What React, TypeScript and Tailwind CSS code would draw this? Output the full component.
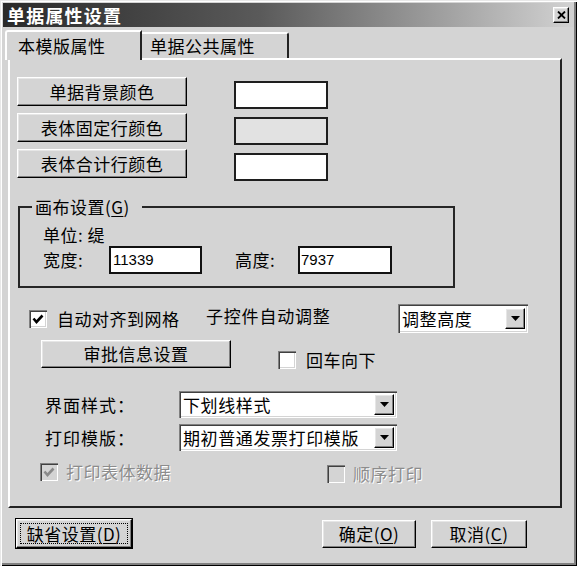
import React from 'react';

// Classic Win9x-style property dialog: 单据属性设置

const FONT = "font-['Noto_Sans_CJK_SC','Noto_Sans',sans-serif]";
const RAISED =
  'border border-t-white border-l-white border-r-black border-b-black shadow-[inset_-1px_-1px_0_#808080,inset_1px_1px_0_#e6e6e6] bg-[#d4d4d4]';
const SUNKEN =
  'shadow-[inset_1px_1px_0_#808080,inset_2px_2px_0_#404040,inset_-1px_-1px_0_#ffffff,inset_-2px_-2px_0_#d4d4d4]';

function Button({
  children,
  className = '',
}: {
  children: React.ReactNode;
  className?: string;
}) {
  return (
    <div
      className={`${RAISED} flex items-center justify-center text-[17px] leading-[20px] tracking-[0.5px] text-black ${className}`}
    >
      {children}
    </div>
  );
}

function Check({ checked = false, disabled = false }: { checked?: boolean; disabled?: boolean }) {
  return (
    <div
      className={`${SUNKEN} flex h-[18px] w-[18px] shrink-0 items-center justify-center ${
        disabled ? 'bg-[#d4d4d4]' : 'bg-white'
      }`}
    >
      {checked && (
        <svg width="12" height="12" viewBox="0 0 12 12">
          <polyline
            points="1.5,5.5 4.5,9 10.5,2.5"
            fill="none"
            stroke={disabled ? '#8a8a8a' : '#000'}
            strokeWidth="2.6"
          />
        </svg>
      )}
    </div>
  );
}

function Combo({ value, className = '' }: { value: string; className?: string }) {
  return (
    <div className={`${SUNKEN} flex items-center bg-white pl-[4px] pr-[3px] ${className}`}>
      <span className="flex-1 whitespace-nowrap text-[17px] leading-[20px] tracking-[0.6px] text-black">{value}</span>
      <div className={`${RAISED} flex h-[21px] w-[20px] shrink-0 items-center justify-center`}>
        <svg width="9" height="5" viewBox="0 0 9 5">
          <polygon points="0,0 9,0 4.5,5" fill="#000" />
        </svg>
      </div>
    </div>
  );
}

function Disabled({ children }: { children: React.ReactNode }) {
  return (
    <span className="text-[17px] leading-[20px] tracking-[0.5px] text-[#8c8c8c] [text-shadow:1px_1px_0_#ffffff]">
      {children}
    </span>
  );
}

export default function App() {
  return (
    <div
      className={`${FONT} flex h-[566px] w-[577px] flex-col bg-[#d4d4d4] p-[3px] shadow-[inset_1px_1px_0_#e8e8e8,inset_2px_2px_0_#ffffff,inset_-1px_-1px_0_#000000,inset_-3px_-3px_0_#808080]`}
    >
      {/* Title bar */}
      <div className="flex h-[24px] items-center bg-[linear-gradient(to_right,#2a2a2a,#5a5a5a_45%,#d2d2d2)] pl-[4px] pr-[5px]">
        <span className="flex-1 text-[18px] font-bold leading-[24px] tracking-[1.2px] text-white">单据属性设置</span>
        <div className={`${RAISED} flex h-[16px] w-[16px] items-center justify-center`}>
          <svg width="9" height="8" viewBox="0 0 9 8">
            <path d="M1 0.5 L8 7.5 M8 0.5 L1 7.5" stroke="#000" strokeWidth="1.8" />
          </svg>
        </div>
      </div>

      {/* Tabs */}
      <div className="mt-[3px] ml-[2px] flex h-[28px] items-end">
        <div className="relative z-10 -mb-[2px] flex h-[30px] w-[137px] items-center rounded-tl-[3px] border-t-2 border-l-2 border-r-2 border-t-white border-l-white border-r-[#222] bg-[#d4d4d4] pl-[11px] text-[17px] leading-[20px] tracking-[0.5px] text-black">
          本模版属性
        </div>
        <div className="flex h-[26px] w-[147px] items-center rounded-tr-[3px] border-t-2 border-r-2 border-t-white border-r-[#222] pl-[8px] text-[17px] leading-[20px] tracking-[0.5px] text-black">
          单据公共属性
        </div>
      </div>

      {/* Tab panel */}
      <div className="ml-[5px] flex h-[450px] w-[554px] flex-col border-2 border-t-white border-l-white border-r-[#222] border-b-[#222] text-[17px] leading-[20px] tracking-[0.5px] text-black">
        <div className="flex flex-col gap-[4px] pt-[17px] pl-[7px]">
          <div className="flex">
            <Button className="h-[29px] w-[170px]">单据背景颜色</Button>
            <div className="mt-[4px] ml-[47px] h-[28px] w-[94px] border-2 border-[#1e1e1e] bg-white" />
          </div>
          <div className="flex">
            <Button className="h-[29px] w-[170px]">表体固定行颜色</Button>
            <div className="mt-[4px] ml-[47px] h-[28px] w-[94px] border-2 border-[#1e1e1e] bg-[#e2e2e2]" />
          </div>
          <div className="flex">
            <Button className="h-[29px] w-[170px]">表体合计行颜色</Button>
            <div className="mt-[4px] ml-[47px] h-[28px] w-[94px] border-2 border-[#1e1e1e] bg-white" />
          </div>
        </div>

        {/* Canvas group */}
        <fieldset className="mt-[16px] ml-[8px] w-[437px] border-2 border-[#262626] pb-[12px]">
          <legend className="ml-[12px] px-[3px] pr-[12px] leading-[20px]">
            画布设置(<span className="underline underline-offset-2">G</span>)
          </legend>
          <div className="pl-[23px]">
            <div className="mt-[8px] leading-[20px]">单位: 缇</div>
            <div className="mt-[1px] flex h-[28px] items-center">
              <span className="w-[66px]">宽度:</span>
              <div className="flex h-[28px] w-[93px] items-center border-2 border-[#111] bg-white pl-[2px] font-['Liberation_Sans',sans-serif] text-[15px] tracking-normal">
                11339
              </div>
              <span className="ml-[33px] w-[63px]">高度:</span>
              <div className="flex h-[28px] w-[94px] items-center border-2 border-[#111] bg-white pl-[1px] font-['Liberation_Sans',sans-serif] text-[15px] tracking-normal">
                7937
              </div>
            </div>
          </div>
        </fieldset>

        {/* Auto align */}
        <div className="mt-[16px] flex h-[29px] items-center pl-[19px]">
          <div className="flex w-[177px] items-center">
            <Check checked />
            <span className="ml-[10px]">自动对齐到网格</span>
          </div>
          <span className="mb-[6px] w-[192px] tracking-[0.8px]">子控件自动调整</span>
          <Combo value="调整高度" className="h-[29px] w-[130px]" />
        </div>

        {/* Approval */}
        <div className="mt-[7px] flex pl-[31px]">
          <Button className="h-[28px] w-[190px]">审批信息设置</Button>
          <div className="mt-[10px] ml-[47px] flex items-center">
            <Check />
            <span className="ml-[10px]">回车向下</span>
          </div>
        </div>

        {/* Styles */}
        <div className="mt-[21px] flex items-center pl-[35px]">
          <span className="w-[134px] tracking-[1px]">界面样式：</span>
          <Combo value="下划线样式" className="h-[27px] w-[218px]" />
        </div>
        <div className="mt-[6px] flex items-center pl-[35px]">
          <span className="w-[134px] tracking-[1px]">打印模版：</span>
          <Combo value="期初普通发票打印模版" className="h-[27px] w-[218px]" />
        </div>

        {/* Disabled options */}
        <div className="mt-[11px] flex h-[20px] items-center pl-[30px]">
          <div className="flex w-[287px] items-center">
            <Check checked disabled />
            <span className="ml-[8px]">
              <Disabled>打印表体数据</Disabled>
            </span>
          </div>
          <div className="mt-[4px] flex items-center">
            <Check disabled />
            <span className="ml-[8px]">
              <Disabled>顺序打印</Disabled>
            </span>
          </div>
        </div>
      </div>

      {/* Footer buttons */}
      <div className="mt-[10px] flex items-start pl-[12px]">
        <div className="h-[31px] w-[118px] border border-black">
          <Button className="h-full w-full p-[3px]">
            <span className="flex h-full w-full items-center justify-center border border-dotted border-black">
              缺省设置(<span className="underline underline-offset-2">D</span>)
            </span>
          </Button>
        </div>
        <Button className="mt-[2px] ml-[189px] h-[28px] w-[94px]">
          确定(<span className="underline underline-offset-2">O</span>)
        </Button>
        <Button className="mt-[2px] ml-[15px] h-[28px] w-[96px]">
          取消(<span className="underline underline-offset-2">C</span>)
        </Button>
      </div>
    </div>
  );
}
